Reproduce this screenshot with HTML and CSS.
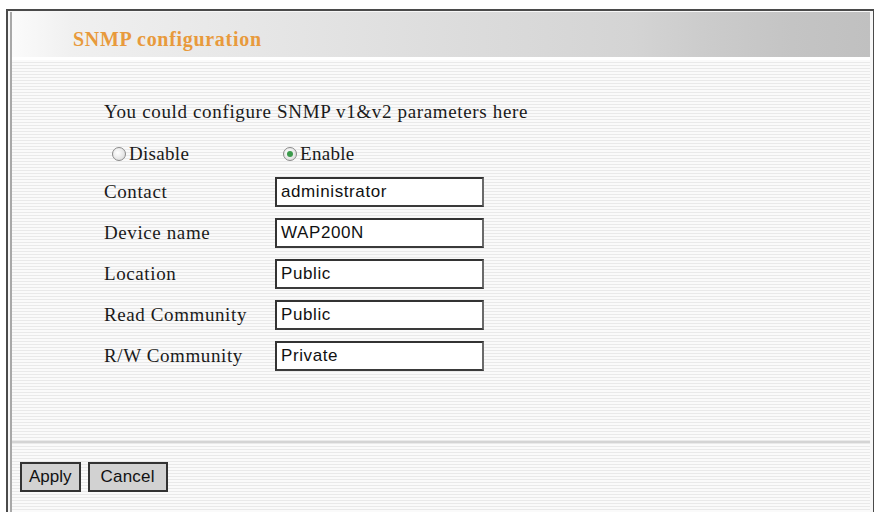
FILE: index.html
```html
<!DOCTYPE html>
<html>
<head>
<meta charset="utf-8">
<link rel="stylesheet" href="styles.css">
</head>
<body>
<div class="panel">
  <div class="inner">
    <div class="header"><span class="title">SNMP configuration</span></div>
    <div class="body">
      <div class="content">
        <p class="intro">You could configure SNMP v1&amp;v2 parameters here</p>
        <div class="radios">
          <label class="radio"><span class="dot"></span>Disable</label>
          <label class="radio"><span class="dot on"></span>Enable</label>
        </div>
        <div class="form">
          <span class="lbl">Contact</span><span class="field">administrator</span>
          <span class="lbl">Device name</span><span class="field">WAP200N</span>
          <span class="lbl">Location</span><span class="field">Public</span>
          <span class="lbl">Read Community</span><span class="field">Public</span>
          <span class="lbl">R/W Community</span><span class="field">Private</span>
        </div>
      </div>
      <div class="sep"></div>
      <div class="buttons">
        <button class="btn">Apply</button>
        <button class="btn">Cancel</button>
      </div>
    </div>
  </div>
</div>
</body>
</html>
```

FILE: styles.css
```css
html, body {
  margin: 0;
  padding: 0;
  background: #ffffff;
  height: 512px;
  overflow: hidden;
}
.panel {
  margin: 9px 0 0 6px;
  width: 860px;
  height: 520px;
  border: 2px solid #4a4a4a;
  border-bottom: none;
  padding: 1px 3px 0 2px;
  background: #f7f7f7;
}
.inner {
  height: 100%;
  border-left: 2px solid #a8a8a8;
  display: flex;
  flex-direction: column;
}
.header {
  height: 45px;
  display: flex;
  align-items: center;
  padding-left: 61px;
  background: linear-gradient(to right, #fbfbfb 0px, #f0f0f0 60px, #e6e6e6 250px, #dcdcdc 450px, #d4d4d4 620px, #cbcbcb 700px, #c4c4c4 780px, #c0c0c0 860px);
}
.title {
  font-family: "Liberation Serif", "Times New Roman", serif;
  font-weight: bold;
  font-size: 20px;
  color: #e89a3c;
  letter-spacing: 0.7px;
  margin-top: 9px;
}
.body {
  flex: 1;
  border-top: 3px solid #ffffff;
  background: repeating-linear-gradient(to bottom, #fafafa 0px, #fafafa 2px, #e9e9e9 2px, #e9e9e9 3px);
  display: flex;
  flex-direction: column;
}
.content {
  padding-left: 92px;
  font-family: "Liberation Serif", "Times New Roman", serif;
  font-size: 19px;
  color: #1a1a1a;
}
.intro {
  margin: 41px 0 0 0;
  line-height: 22px;
  letter-spacing: 0.65px;
}
.radios {
  display: flex;
  margin-top: 21px;
  height: 20px;
  align-items: center;
  padding-left: 8px;
}
.radio {
  display: flex;
  align-items: center;
  width: 171px;
  letter-spacing: 0.3px;
}
.dot {
  width: 12px;
  height: 12px;
  border: 1px solid #8a8a8a;
  border-radius: 50%;
  background: radial-gradient(circle at 40% 40%, #ffffff, #d6d6d6);
  margin-right: 3px;
  display: flex;
  align-items: center;
  justify-content: center;
}
.dot.on::after {
  content: "";
  width: 6px;
  height: 6px;
  border-radius: 50%;
  background: #3c9a4c;
}
.form {
  display: grid;
  grid-template-columns: 171px 209px;
  grid-auto-rows: 30px;
  row-gap: 11px;
  margin-top: 13px;
  align-items: center;
}
.lbl {
  letter-spacing: 0.6px;
}
.field {
  height: 30px;
  box-sizing: border-box;
  border: 2px solid #333333;
  border-right-color: #6a6a6a;
  border-bottom-color: #3a3a3a;
  background: #ffffff;
  font-family: "Liberation Sans", Arial, sans-serif;
  font-size: 17px;
  letter-spacing: 0.6px;
  line-height: 26px;
  padding-left: 4px;
  color: #111111;
}
.sep {
  margin-top: 70px;
  height: 2px;
  background: #d4d4d4;
}
.buttons {
  display: flex;
  gap: 7px;
  padding-left: 8px;
  margin-top: 19px;
}
.btn {
  height: 30px;
  box-sizing: border-box;
  border: 2px solid #333333;
  background: #d2d2d2;
  font-family: "Liberation Sans", Arial, sans-serif;
  font-size: 17px;
  color: #111111;
  padding: 0 7px;
  border-radius: 0;
}
.btn + .btn {
  padding: 0 11px;
  letter-spacing: 0.2px;
}
```
